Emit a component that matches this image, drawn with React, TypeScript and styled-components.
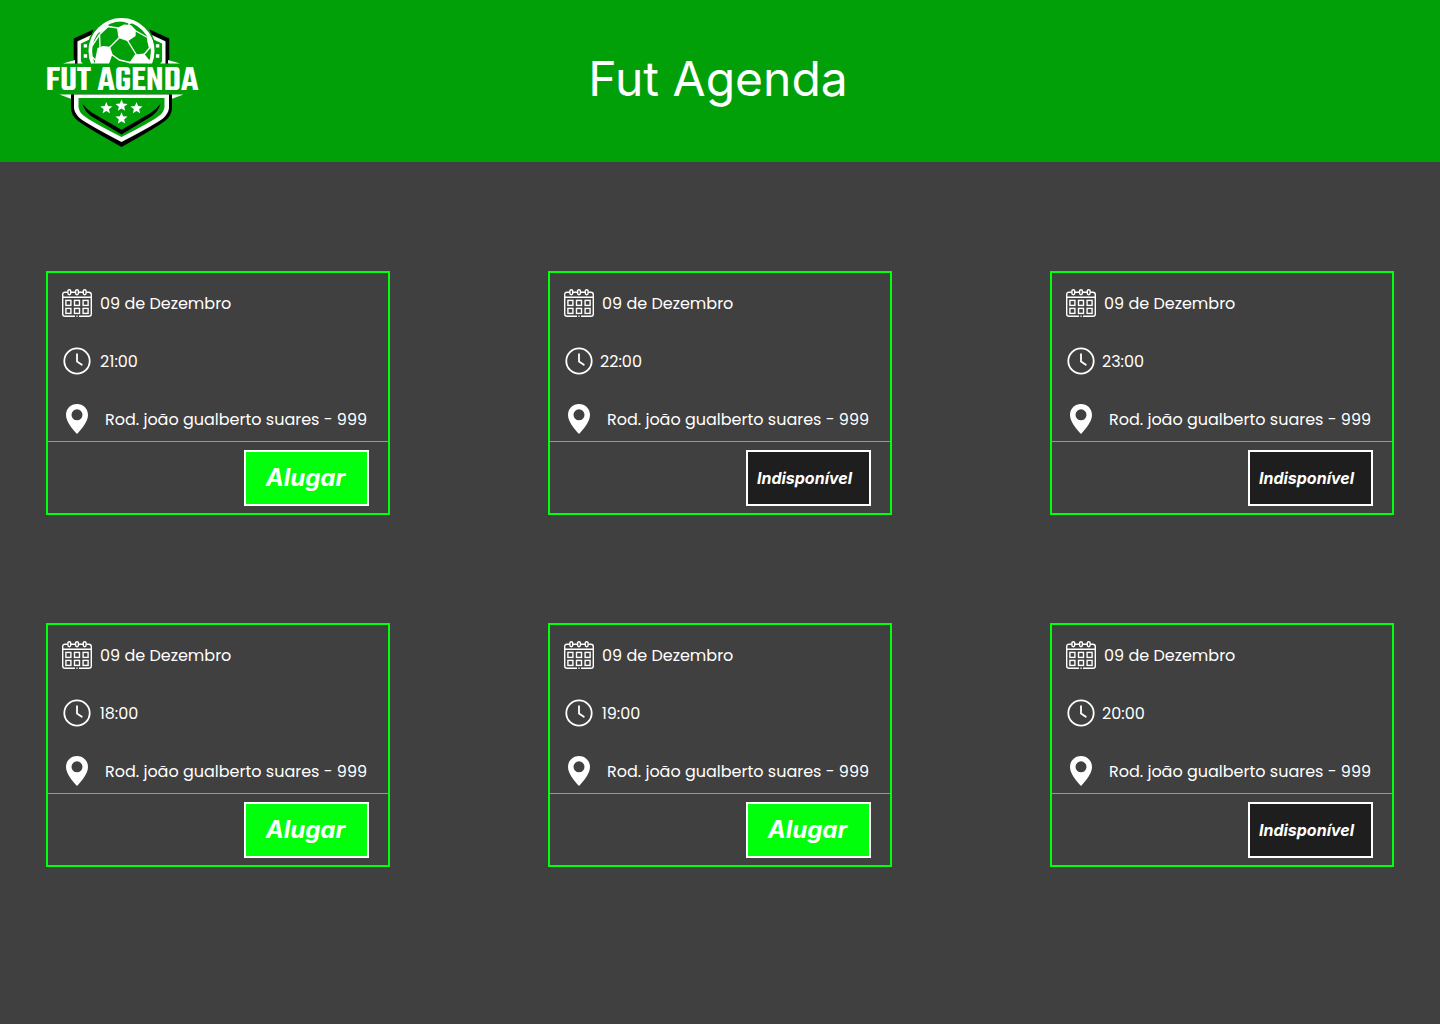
import React from "react";
import styled, { createGlobalStyle } from "styled-components";

const GlobalStyle = createGlobalStyle`
  *, *::before, *::after {
    box-sizing: border-box;
  }

  body {
    margin: 0;
    min-height: 100vh;
    background: #404040;
    color: #ffffff;
    font-family: Inter, "Liberation Sans", sans-serif;
  }
`;

const Header = styled.header`
  display: grid;
  grid-template-columns: 1fr auto 1fr;
  align-items: center;
  min-height: 162px;
  padding: 12px 40px;
  background: #02a008;
`;

const HomeLink = styled.a`
  display: block;
  justify-self: start;
  line-height: 0;
`;

const LogoSvg = styled.svg`
  width: 164px;
  height: 138px;
`;

const Wordmark = styled.text`
  font-family: Teko, "Roboto Condensed", "Liberation Sans Narrow", sans-serif;
  font-size: 36px;
  font-weight: 600;
  fill: #ffffff;
`;

const Title = styled.h1`
  margin: 0;
  padding: 0 4px 4px 0;
  font-size: 48px;
  font-weight: 400;
  line-height: 58px;
`;

const Schedule = styled.main`
  display: grid;
  grid-template-columns: repeat(auto-fill, 344px);
  justify-content: space-between;
  row-gap: 108px;
  padding: 109px 46px;
`;

const Card = styled.article`
  border: 2px solid #00ff0a;
`;

const Details = styled.ul`
  display: flex;
  flex-direction: column;
  gap: 28px;
  margin: 0;
  padding: 15px 14px 7px;
  list-style: none;
`;

const Detail = styled.li<{ $gap: number }>`
  display: flex;
  align-items: center;
  gap: ${({ $gap }) => $gap}px;
  height: 30px;
  font-family: Poppins, Inter, "Liberation Sans", sans-serif;
  font-size: 16px;
  line-height: 24px;
  white-space: nowrap;
`;

const Label = styled.span`
  padding-top: 2px;
`;

const Time = styled.time`
  min-width: 42px;
  padding-top: 2px;
  text-align: center;
`;

const Icon = styled.svg`
  flex: none;
  width: 30px;
  height: 30px;
`;

const CardFooter = styled.footer`
  display: flex;
  justify-content: flex-end;
  padding: 8px 19px 7px;
  border-top: 1px solid #00ff0a;
`;

const RentButton = styled.button<{ $available: boolean }>`
  width: 125px;
  height: 56px;
  padding: ${({ $available }) => ($available ? "0 2px 2px 0" : "0 8px 0 0")};
  border: 2px solid #ffffff;
  background: ${({ $available }) => ($available ? "#00ff0a" : "#1e1e1e")};
  color: #ffffff;
  font-family: Inter, "Liberation Sans", sans-serif;
  font-size: ${({ $available }) => ($available ? 24 : 16)}px;
  font-style: italic;
  font-weight: 700;
  cursor: ${({ $available }) => ($available ? "pointer" : "default")};
`;

const STAR =
  "M0-6.2 1.6-2.2 6-1.9 2.6.9 3.7 5 0 2.7-3.7 5-2.6.9-6-1.9-1.6-2.2Z";

const STARS = [
  [106.3, 108.3],
  [121.5, 105.8],
  [136.5, 108.3],
  [121.5, 118.5],
];

function ShieldSide() {
  return (
    <>
      <path d="M93.3 29.5 73.7 38.5V63.5H77.5V41L93 34Z" fill="#000" />
      <path d="M92 34.8 77.6 41.4V63.5H82.8L80.9 61.5V43.6L89.5 39.5Z" fill="#fff" />
      <path d="M83.7 44.3H87.2V47.6H83.7ZM83.7 54.3H87.2V57.8H83.7Z" fill="#fff" />
      <path d="M63 63.5 75 60V63.5Z" fill="#fff" />
      <path d="M59.5 94.5H71.5V99Z" fill="#fff" />
    </>
  );
}

function Logo() {
  return (
    <LogoSvg viewBox="40 12 164 138" role="img" aria-label="Fut Agenda">
      <clipPath id="ball-clip">
        <rect x="80" y="14" width="84" height="49.6" />
      </clipPath>
      <ShieldSide />
      <g transform="translate(243 0) scale(-1 1)">
        <ShieldSide />
      </g>
      <g clipPath="url(#ball-clip)">
        <circle cx="121.5" cy="51" r="34.5" fill="#02a008" />
        <circle cx="121.5" cy="51" r="31.2" fill="none" stroke="#fff" strokeWidth="3.6" />
        <g fill="#fff">
          <path d="M117 28 124 24.5 131 25 135.8 30 135.6 36 127.8 41.2 118.5 38Z" />
          <path d="M97.5 48 103 46 110 46.8 112.5 54 109 64H95L95 60.5Z" />
          <path d="M135 54.5 144 53.5 150 61 149 64H128.5Z" />
          <path d="M98 31 107 25 108.5 26.5 100 33Z" />
          <path d="M148 33 153 41 153 50 150 48 147.5 42Z" />
          <path d="M119 20.5 133 22.5 130.5 24Z" />
        </g>
        <g fill="none" stroke="#fff" strokeWidth="1.4">
          <path d="M118 28 108 26.5 99.5 34.5 100 48M119 38 109 48M127.5 40.5 136.5 55M135 30.5 147.5 37.5M147.5 37.5 149.5 48 144 54.5M111 54 119.5 60 130 62.5M99.5 34.5 92 46M108 26.5 107.5 22M95.5 60 91 56M129 25V19" />
        </g>
      </g>
      <Wordmark x="122" y="90" textAnchor="middle">
        FUT AGENDA
      </Wordmark>
      <path
        d="M71 94.5V108Q71 115 77.5 120.5 84 126 121.5 147 159 126 165.5 120.5 172 115 172 108V94.5Z"
        fill="#000"
      />
      <path
        d="M74 94.5V108Q74.5 113 79.5 118 87 124 121.5 142 156 124 163.5 118 168.5 113 169 108V94.5Z"
        fill="#fff"
      />
      <path
        d="M78.5 98V107Q79 112 83.5 115.5 90 121 121.5 137 153 121 159.5 115.5 164 112 164.5 107V98Z"
        fill="#02a008"
      />
      <path
        d="M82.5 104Q87 109.5 92.5 113L121.5 129.8 150.5 113Q156 109.5 160.5 104 158.5 111 152 116L121.5 134.5 91 116Q84.5 111 82.5 104Z"
        fill="#000"
      />
      {STARS.map(([x, y]) => (
        <path key={`${x}-${y}`} d={STAR} transform={`translate(${x} ${y})`} fill="#fff" />
      ))}
    </LogoSvg>
  );
}

function CalendarIcon() {
  return (
    <Icon viewBox="0 0 30 30" fill="none" stroke="#fff" strokeWidth="1.4" aria-hidden="true">
      <path d="M5.5 4.2H3.2Q.7 4.2.7 6.7V26Q.7 28.3 3.2 28.3H13M17 28.3H26.8Q29.3 28.3 29.3 26V6.7Q29.3 4.2 26.8 4.2H24.5M9 4.2H13M17 4.2H21M.7 9.2H29.3M14.4 28.3H15.6" />
      {[7.3, 15, 22.7].map((x) => (
        <rect key={x} x={x - 1.4} y="1.7" width="2.8" height="5" rx="1.4" />
      ))}
      {[12.4, 20.4].map((y) =>
        [3.9, 12.5, 21.1].map((x) => (
          <rect key={`${x}-${y}`} x={x} y={y} width="5" height="5" />
        ))
      )}
    </Icon>
  );
}

function ClockIcon() {
  return (
    <Icon viewBox="0 0 30 30" fill="none" stroke="#fff" strokeWidth="1.8" aria-hidden="true">
      <circle cx="15" cy="15" r="12.7" />
      <path d="M15 8.2V15.5L19.8 18.8" strokeLinecap="round" />
    </Icon>
  );
}

function PinIcon() {
  return (
    <Icon viewBox="0 0 30 30" fill="#fff" aria-hidden="true">
      <path
        fillRule="evenodd"
        d="M15 0C8.9 0 4 4.7 4 10.9 4 17.5 10.2 24.5 15 30 19.8 24.5 26 17.5 26 10.9 26 4.7 21.1 0 15 0ZM15 5.3A5.5 5.5 0 1 1 15 16.3 5.5 5.5 0 1 1 15 5.3Z"
      />
    </Icon>
  );
}

type Slot = { time: string; available: boolean };

const SLOTS: Slot[] = [
  { time: "21:00", available: true },
  { time: "22:00", available: false },
  { time: "23:00", available: false },
  { time: "18:00", available: true },
  { time: "19:00", available: true },
  { time: "20:00", available: false },
];

function SlotCard({ time, available }: Slot) {
  return (
    <Card>
      <Details>
        <Detail $gap={8}>
          <CalendarIcon />
          <Label>09 de Dezembro</Label>
        </Detail>
        <Detail $gap={6}>
          <ClockIcon />
          <Time>{time}</Time>
        </Detail>
        <Detail $gap={13}>
          <PinIcon />
          <Label>Rod. joão gualberto suares - 999</Label>
        </Detail>
      </Details>
      <CardFooter>
        <RentButton type="button" $available={available}>
          {available ? "Alugar" : "Indisponível"}
        </RentButton>
      </CardFooter>
    </Card>
  );
}

export default function App() {
  return (
    <>
      <GlobalStyle />
      <Header>
        <HomeLink href="#">
          <Logo />
        </HomeLink>
        <Title>Fut Agenda</Title>
      </Header>
      <Schedule>
        {SLOTS.map((slot) => (
          <SlotCard key={slot.time} {...slot} />
        ))}
      </Schedule>
    </>
  );
}
